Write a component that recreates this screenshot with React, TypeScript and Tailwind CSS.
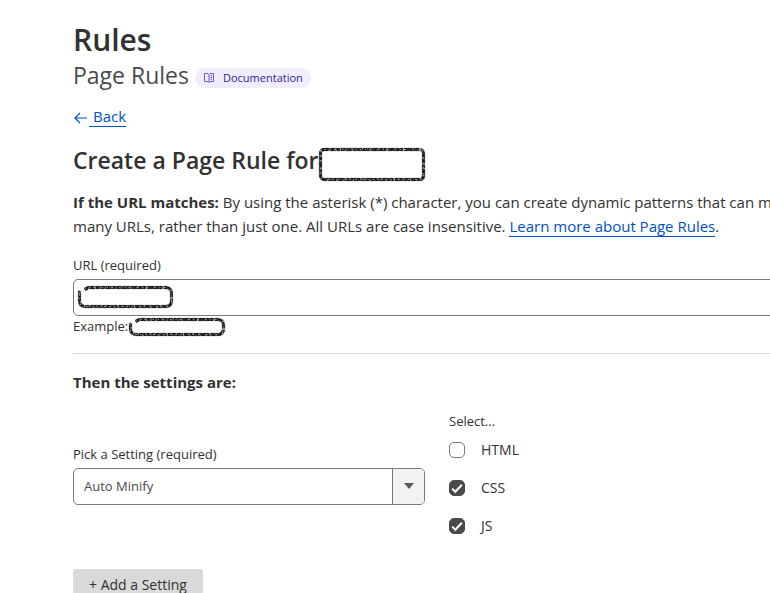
import React, { useState } from "react";

type SketchBoxProps = { width: number; height: number; radius: number; open?: boolean; className?: string };

function SketchBox({ width, height, radius: r, open = false, className = "" }: SketchBoxProps) {
  const right = width - 2.5;
  const bottom = height - 2.5;
  const edge = 2.5;
  const start = open ? `M${edge + r - 1} 4.5L${edge + r + 3} ${edge}` : `M${edge + r} ${edge}`;
  const end = open ? "V6" : `V${edge + r}Q${edge} ${edge} ${edge + r} ${edge}`;
  const d = `${start}H${right - r}Q${right} ${edge} ${right} ${edge + r}V${bottom - r}Q${right} ${bottom} ${right - r} ${bottom}H${edge + r}Q${edge} ${bottom} ${edge} ${bottom - r}${end}`;
  return (
    <svg
      width={width}
      height={height}
      viewBox={`0 0 ${width} ${height}`}
      fill="none"
      aria-hidden="true"
      className={`shrink-0 ${className}`}
    >
      <path d={d} stroke="#a3a3a3" strokeWidth="3.6" strokeDasharray="5 1 7 .6 4 1 9 .8" />
      <path d={d} stroke="#3d3d3d" strokeWidth="2.8" strokeDasharray="4 1.2 6 1.5 3 1" />
      <g stroke="#111" strokeWidth="1.2" strokeDasharray="3 2 5 1.5 2 2.5">
        <path d={d} transform="translate(.5 .6)" />
        <path d={d} transform="translate(-.5 -.6)" strokeDashoffset="4" />
      </g>
      <path d={d} stroke="#9a9a9a" strokeWidth="1.2" strokeDasharray="1.5 4 1 3 2 6" />
    </svg>
  );
}

function BookIcon() {
  return (
    <svg width="12" height="12" viewBox="0 0 12 12" fill="none" stroke="#6b5bd6" aria-hidden="true">
      <path d="M6 2.5 5 1.5H1.5v8H5l1 1 1-1h3.5v-8H7l-1 1Zm0 0v8" />
      <path d="M7.5 3.7H9M7.5 5.5H9M7.5 7.3H9" />
    </svg>
  );
}

function Option({ label, initial }: { label: string; initial: boolean }) {
  const [checked, setChecked] = useState(initial);
  return (
    <label className="flex h-[38px] items-center gap-4 text-sm">
      <span className="relative size-4">
        <input
          type="checkbox"
          checked={checked}
          onChange={(e) => setChecked(e.target.checked)}
          className="peer block size-4 appearance-none rounded-[5px] border border-[#797979] bg-white checked:border-[#4a4a4a] checked:bg-[#4a4a4a]"
        />
        <svg
          viewBox="0 0 16 16"
          fill="none"
          stroke="#fff"
          strokeWidth="2"
          aria-hidden="true"
          className="pointer-events-none absolute inset-0 hidden size-4 peer-checked:block"
        >
          <path d="m3.2 8.6 3.1 3.1 6.6-7" />
        </svg>
      </span>
      {label}
    </label>
  );
}

export default function App() {
  return (
    <div className="overflow-hidden bg-white font-['Open_Sans','Noto_Sans',sans-serif] text-[#313131]">
      <main className="min-w-[940px] pt-5 pl-[73px]">
        <h1 className="text-3xl leading-10 font-semibold">Rules</h1>
        <div className="flex h-8 items-center gap-1.5 text-[#4a4a4a]">
          <p className="pb-0.5 text-[23px] leading-8">Page Rules</p>
          <a
            href="#documentation"
            className="mt-1 flex h-5 items-center gap-2 rounded-full bg-[#f1edfc] px-2 text-[11px] text-[#2c1f9e]"
          >
            <BookIcon />
            Documentation
          </a>
        </div>
        <a href="#back" className="mt-3.5 flex w-fit items-center text-[15px] leading-6 text-[#0051c3]">
          <svg width="16" height="16" viewBox="0 0 16 16" fill="none" stroke="currentColor" aria-hidden="true">
            <path d="M14 9H2.5M7 4 2 9l5 5" strokeWidth="1.2" />
          </svg>
          <span className="border-b border-[#0051c3] pl-1 leading-5">Back</span>
        </a>

        <h2 className="mt-[15px] flex h-9 items-center text-[23px] font-semibold">
          Create a Page Rule for
          <SketchBox width={108} height={35} radius={4} className="mt-2" />
        </h2>
        <p className="mt-3 text-[15px] leading-6 whitespace-nowrap">
          <strong>If the URL matches:</strong> By using the asterisk (*) character, you can create dynamic patterns that
          can match
          <br />
          many URLs, rather than just one. All URLs are case insensitive.{" "}
          <a href="#learn" className="border-b border-[#0051c3] text-[#0051c3]">
            Learn more about Page Rules
          </a>
          .
        </p>

        <label htmlFor="url" className="mt-[15px] block text-[13px] leading-6">
          URL (required)
        </label>
        <div className="relative mt-0.5">
          <input id="url" type="text" className="block h-[37px] w-full rounded-[5px] border border-[#797979] px-2.5" />
          <SketchBox
            width={97}
            height={24}
            radius={6}
            open
            className="pointer-events-none absolute top-1.5 left-1"
          />
        </div>
        <div className="flex h-[22px] items-center text-[13px]">
          Example:
          <SketchBox width={98} height={20} radius={6} open />
        </div>
        <hr className="mt-[15px] border-[#d9d9d9]" />

        <h3 className="mt-4 text-[15px] leading-6 font-bold">Then the settings are:</h3>
        <div className="mt-[17px] flex items-center gap-6">
          <div className="w-[352px] pb-2.5">
            <label htmlFor="setting" className="block text-[13px] leading-6">
              Pick a Setting (required)
            </label>
            <div className="relative mt-0.5">
              <select
                id="setting"
                className="block h-[37px] w-full appearance-none rounded-[5px] border border-[#797979] bg-white px-2.5 pt-0.5 text-[13px] text-[#4a4a4a]"
              >
                <option>Auto Minify</option>
              </select>
              <span className="pointer-events-none absolute inset-y-px right-px flex w-8 items-center justify-center rounded-r border-l border-[#797979] bg-[#f2f2f2]">
                <svg width="10" height="6" viewBox="0 0 10 6" fill="#595959" aria-hidden="true">
                  <path d="M0 0h10L5 6Z" />
                </svg>
              </span>
            </div>
          </div>
          <fieldset>
            <legend className="text-[13px] leading-5">Select...</legend>
            <Option label="HTML" initial={false} />
            <Option label="CSS" initial />
            <Option label="JS" initial />
          </fieldset>
        </div>
        <button type="button" className="mt-6 h-8 rounded-[3px] bg-[#d9d9d9] px-4 text-sm">
          + Add a Setting
        </button>
      </main>
    </div>
  );
}
